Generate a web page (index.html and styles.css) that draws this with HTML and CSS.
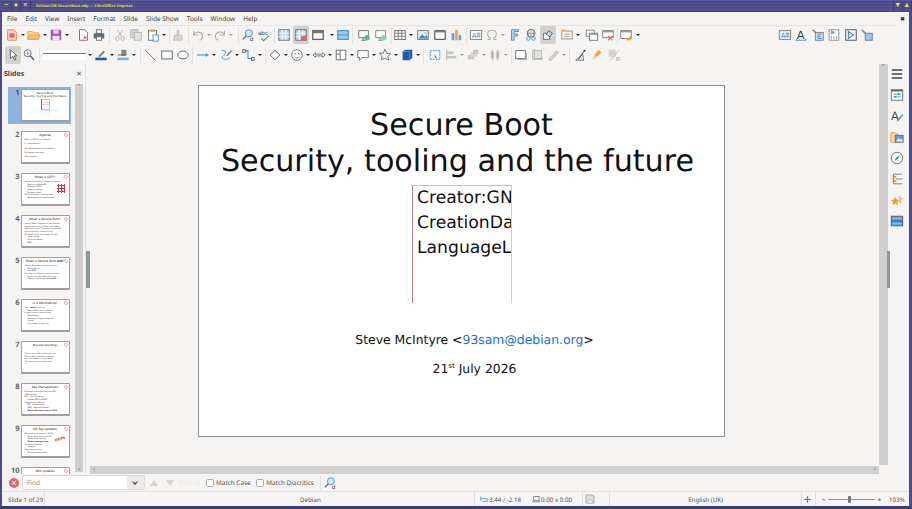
FILE: index.html
```html
<!DOCTYPE html>
<html lang="en">
<head>
    <meta charset="UTF-8">
    <title>Debian/DB-SecureBoot.odp — LibreOffice Impress</title>
    <link rel="stylesheet" href="styles.css">
</head>
<body>
<div class="window">
    <!-- window manager title bar -->
    <div class="titlebar">
        <span class="wm-btn">&#8722;</span>
        <span class="wm-btn">&#9679;</span>
        <span class="wm-btn">&#215;</span>
        <span class="wm-title">Debian/DB-SecureBoot.odp — LibreOffice Impress</span>
        <span class="wm-btn wm-right">&#9660;</span>
        <span class="wm-btn">&#9650;</span>
    </div>

    <div class="menubar">
        <span>File</span><span>Edit</span><span>View</span><span>Insert</span><span>Format</span><span>Slide</span><span>Slide Show</span><span>Tools</span><span>Window</span><span>Help</span>
        <span class="doc-close">&#10006;</span>
    </div>

    <!-- standard toolbar -->
    <div class="toolbar tb-top">
        <i class="b"><svg viewBox="0 0 16 16"><path d="M3 2h7l3 3v9H3z" fill="#fbd5c4" stroke="#e8794f"/><rect x="5" y="6" width="6" height="5" fill="#e5636b"/></svg></i><i class="a"></i>
        <i class="b"><svg viewBox="0 0 16 16"><path d="M1 13V4h5l1 1.500h6V13z" fill="#fbd7a8" stroke="#ee9d45"/><path d="M1 13l2-5h12l-2 5z" fill="#f8c078" stroke="#ee9d45"/></svg></i><i class="a"></i>
        <i class="b"><svg viewBox="0 0 16 16"><path d="M2 2h11l1 1v11H2z" fill="#a65bb5"/><rect x="5" y="2.500" width="6" height="4" fill="#e7d3ec"/><rect x="4" y="9" width="8" height="5" fill="#f1e6f4"/></svg></i><i class="a"></i>
        <i class="b ml5"><svg viewBox="0 0 16 16"><path d="M4 2h6l3 3v9H4z" fill="#fff" stroke="#666"/><path d="M8 13c2-3 2-4 1-6 1 3 3 4 5 4-2 0-4 1-6 2z" fill="#e5434b"/></svg></i>
        <i class="b"><svg viewBox="0 0 16 16"><rect x="5" y="2" width="6" height="4" fill="#fff" stroke="#666"/><rect x="2" y="6" width="12" height="6" rx="1" fill="#5f6b75"/><rect x="5" y="10" width="6" height="4" fill="#fff" stroke="#666"/></svg></i>
        <i class="s ml2"></i>
        <i class="b ml2 off"><svg viewBox="0 0 16 16"><path d="M5 2l5 8M11 2L6 10" fill="none" stroke="#555"/><circle cx="5" cy="12" r="2" fill="none" stroke="#555"/><circle cx="11" cy="12" r="2" fill="none" stroke="#555"/></svg></i>
        <i class="b off"><svg viewBox="0 0 16 16"><rect x="2" y="2" width="8" height="9" fill="#aaa" stroke="#555"/><rect x="6" y="5" width="8" height="9" fill="#ccc" stroke="#555"/></svg></i>
        <i class="b ml1"><svg viewBox="0 0 16 16"><rect x="3" y="3" width="9" height="11" fill="#fff" stroke="#666"/><rect x="5" y="1.500" width="5" height="3" fill="#e8a24f"/><rect x="8" y="8" width="6" height="7" fill="#fff" stroke="#3e89c9"/></svg></i><i class="a"></i>
        <i class="s ml2"></i>
        <i class="b off"><svg viewBox="0 0 16 16"><rect x="6.500" y="2" width="3" height="6" fill="#888"/><path d="M4 8h8l1 6H3z" fill="#aaa" stroke="#777"/></svg></i>
        <i class="s ml2"></i>
        <i class="b ml1 off"><svg viewBox="0 0 16 16"><path d="M3 3v5h5M3 8c2-4 8-5 10 0 1 3-1 5-3 6" fill="none" stroke="#555" stroke-width="1.300"/></svg></i><i class="a off"></i>
        <i class="b off"><svg viewBox="0 0 16 16"><path d="M13 3v5H8M13 8C11 4 5 3 3 8c-1 3 1 5 3 6" fill="none" stroke="#555" stroke-width="1.300"/></svg></i><i class="a off"></i>
        <i class="s ml4"></i>
        <i class="b ml1"><svg viewBox="0 0 16 16"><circle cx="9" cy="6" r="4" fill="#d6e8f7" stroke="#3e89c9"/><path d="M6 9l-4 4" stroke="#555" stroke-width="1.500"/><text x="10" y="15" class="ico-t">d</text></svg></i>
        <i class="b"><svg viewBox="0 0 16 16"><text x="1" y="7.500" class="ico-t">abc</text><path d="M5 12l2.500 2.500L14 8.500" fill="none" stroke="#47a46b" stroke-width="1.300"/></svg></i>
        <i class="s ml2"></i>
        <i class="b ml1"><svg viewBox="0 0 16 16"><rect x="2" y="2" width="12" height="12" fill="#bcd8f0" stroke="#666"/><path d="M6 2v12M10 2v12M2 6h12M2 10h12" stroke="#fff"/></svg></i>
        <i class="b ml1 on"><svg viewBox="0 0 16 16"><rect x="2" y="2" width="12" height="12" fill="#bcd8f0" stroke="#666"/><path d="M6 2v12M10 2v12M2 6h12M2 10h12" stroke="#fff"/><rect x="8" y="9" width="6" height="5" fill="#e5636b"/></svg></i>
        <i class="b ml1"><svg viewBox="0 0 16 16"><rect x="2" y="3" width="12" height="10" fill="#fff" stroke="#666" stroke-width="1.500"/><rect x="2" y="3" width="12" height="3" fill="#777"/></svg></i><i class="a ml3"></i>
        <i class="b"><svg viewBox="0 0 16 16"><rect x="2" y="3" width="12" height="10" fill="#9cc8ee" stroke="#3e89c9" stroke-width="1.200"/><path d="M2 8h12" stroke="#3e89c9"/></svg></i>
        <i class="s ml1"></i>
        <i class="b ml3"><svg viewBox="0 0 16 16"><path d="M2 3h11v8H2zM7 11v3M5 14h5" fill="#fff" stroke="#666"/><circle cx="11.500" cy="11" r="3" fill="#5dbb82"/></svg></i>
        <i class="b ml1"><svg viewBox="0 0 16 16"><path d="M2 3h11v8H2zM7 11v3M5 14h5" fill="#fff" stroke="#777"/><circle cx="11.500" cy="11" r="3" fill="#8fcfa8"/></svg></i>
        <i class="s ml2"></i>
        <i class="b"><svg viewBox="0 0 16 16"><rect x="2" y="3" width="12" height="10" fill="#fff" stroke="#666"/><path d="M2 6h12M2 9.500h12M6 3v10M10 3v10" stroke="#777"/></svg></i><i class="a"></i>
        <i class="b ml1"><svg viewBox="0 0 16 16"><rect x="2" y="3" width="12" height="10" fill="#e8f2fb" stroke="#666"/><path d="M3 12l4-5 3 3 2-2 2 4z" fill="#3e89c9"/><circle cx="11" cy="6" r="1.200" fill="#f0a040"/></svg></i>
        <i class="b ml1"><svg viewBox="0 0 16 16"><rect x="2" y="3" width="12" height="10" rx="1" fill="#fff" stroke="#666" stroke-width="1.500"/><rect x="2" y="3" width="12" height="2" fill="#777"/></svg></i>
        <i class="b"><svg viewBox="0 0 16 16"><rect x="3" y="6" width="3" height="8" fill="#5aa4e0"/><rect x="7" y="2" width="3" height="12" fill="#f0a040"/><rect x="11" y="8" width="3" height="6" fill="#5aa4e0"/></svg></i>
        <i class="s ml2"></i>
        <i class="b ml1"><svg viewBox="0 0 16 16"><rect x="1.500" y="3" width="13" height="10" fill="#fff" stroke="#777"/><text x="3" y="11" class="ico-t blue">A</text><path d="M9 6h4M9 8h4M9 10h4" stroke="#777"/></svg></i>
        <i class="b off"><svg viewBox="0 0 16 16"><path d="M3 13h3v-1.500C3.500 10 3 8 3 7c0-3 2-4.500 5-4.500S13 4 13 7c0 1-.5 3-3 4.500V13h3" fill="none" stroke="#555" stroke-width="1.200"/></svg></i><i class="a off"></i>
        <i class="b ml1"><svg viewBox="0 0 16 16"><path d="M4 2h8v2H7v3h4v2H7v5H4z" fill="#bcd8f0" stroke="#3e89c9"/></svg></i>
        <i class="b"><svg viewBox="0 0 16 16"><circle cx="8" cy="6" r="4.500" fill="#fff" stroke="#666"/><path d="M3.500 6h9M8 1.500v9M5.500 2.500c-1 2-1 5 0 7M10.500 2.500c1 2 1 5 0 7" fill="none" stroke="#666" stroke-width=".7"/><circle cx="5" cy="12" r="2" fill="#fff" stroke="#3e89c9"/><circle cx="11" cy="12" r="2" fill="#fff" stroke="#3e89c9"/></svg></i>
        <i class="b ml1 on"><svg viewBox="0 0 16 16"><rect x="3" y="6" width="7" height="7" fill="#fff" stroke="#666"/><path d="M9 3l4 3-3 4-4-3z" fill="#bcd8f0" stroke="#555"/></svg></i>
        <i class="b ml3"><svg viewBox="0 0 16 16"><rect x="2" y="3.500" width="12" height="9" fill="#fdf3e5" stroke="#888"/><rect x="2" y="1.500" width="4" height="3" fill="#f0b070"/><path d="M5 7h6M5 9.500h6" stroke="#999"/></svg></i><i class="a"></i>
        <i class="b ml3"><svg viewBox="0 0 16 16"><rect x="1.500" y="2.500" width="9" height="7" fill="#fff" stroke="#777"/><rect x="5" y="6" width="9.500" height="8" fill="#fff" stroke="#666"/><rect x="5" y="6" width="9.500" height="2" fill="#999"/></svg></i>
        <i class="b"><svg viewBox="0 0 16 16"><rect x="2" y="3" width="12" height="8" fill="#fff" stroke="#777"/><rect x="2" y="3" width="12" height="2" fill="#999"/><path d="M8 9l5 5M13 9l-5 5" stroke="#e5636b" stroke-width="1.300"/></svg></i>
        <i class="s ml1"></i>
        <i class="b"><svg viewBox="0 0 16 16"><rect x="2" y="3" width="12" height="9" fill="#fff" stroke="#777"/><rect x="2" y="3" width="12" height="2" fill="#999"/><path d="M14 8v6H8z" fill="#f0a040"/></svg></i><i class="a ml1"></i>

        <i class="b push"><svg viewBox="0 0 16 16"><rect x="1.500" y="3" width="13" height="10" fill="#eef5fb" stroke="#777"/><text x="3" y="11" class="ico-t blue">A</text><path d="M9 6h4M9 8h4M9 10h4" stroke="#777"/></svg></i>
        <i class="b ml05"><svg viewBox="0 0 16 16"><text x="3" y="12" class="ico-t big">A</text><path d="M2 14h12" stroke="#3e89c9"/><path d="M2 14l1.500-1.500M14 14l-1.500-1.500" stroke="#3e89c9"/></svg></i>
        <i class="b ml05"><svg viewBox="0 0 16 16"><rect x="5" y="5" width="9" height="9" fill="#cfe3f5" stroke="#777"/><path d="M2 2l4 4" stroke="#888" stroke-width="2"/><path d="M12 7H8v5h4M8 9.500h3" fill="none" stroke="#3e89c9"/></svg></i>
        <i class="b ml05"><svg viewBox="0 0 16 16"><rect x="2.500" y="2" width="11" height="12" fill="#fff" stroke="#888"/><path d="M5 3l4 2-4 2zM5 9v4M8 9v4M11 9v4" fill="#5aa4e0" stroke="#999"/></svg></i>
        <i class="b ml05"><svg viewBox="0 0 16 16"><rect x="2" y="2" width="12" height="12" fill="#fff" stroke="#666" stroke-width="1.300"/><path d="M5 4l6 4-6 4zM5 4v8" fill="none" stroke="#3e89c9" stroke-width="1.300"/></svg></i>
        <i class="b ml05 tb-end"><svg viewBox="0 0 16 16"><rect x="6" y="6" width="8" height="8" fill="#9cc8ee" stroke="#777"/><path d="M2 2l5 5" stroke="#888" stroke-width="2"/></svg></i>
    </div>

    <!-- drawing toolbar -->
    <div class="toolbar tb-draw">
        <i class="b on"><svg viewBox="0 0 16 16"><path d="M5 2v10l2.500-2.500L10 14l1.500-1-2.500-4h3.500z" fill="#fff" stroke="#555"/></svg></i>
        <i class="b"><svg viewBox="0 0 16 16"><circle cx="6.500" cy="6" r="4" fill="#e8f2fb" stroke="#666"/><path d="M9.500 9l4 4.500" stroke="#555" stroke-width="1.600"/><path d="M5 6h3M6.500 4.500v3" stroke="#e5636b"/></svg></i>
        <i class="s ml2"></i>
        <span class="line-box ml3"></span><i class="a ml1"></i>
        <i class="b"><svg viewBox="0 0 16 16"><path d="M5 9l6-6 1.500 1.500-6 6z" fill="#777"/><rect x="1.500" y="11" width="13" height="3" fill="#1c5ea8"/></svg></i><i class="a"></i>
        <i class="b"><svg viewBox="0 0 16 16"><rect x="6" y="2" width="6" height="7" fill="#888"/><path d="M2 8l8 0" stroke="#555"/><rect x="1.500" y="11" width="13" height="3" fill="#7fb2e0"/></svg></i><i class="a"></i>
        <i class="s ml3"></i>
        <i class="b ml1"><svg viewBox="0 0 16 16"><path d="M2 2l12 12" stroke="#3e89c9" stroke-width="1.100"/></svg></i>
        <i class="b ml1"><svg viewBox="0 0 16 16"><rect x="2" y="3.500" width="12" height="9" fill="#fff" stroke="#666" stroke-width="1.100"/></svg></i>
        <i class="b"><svg viewBox="0 0 16 16"><ellipse cx="8" cy="8" rx="6" ry="4.500" fill="#fff" stroke="#666" stroke-width="1.100"/></svg></i>
        <i class="s ml1"></i>
        <i class="b ml2"><svg viewBox="0 0 16 16"><path d="M1 8h10" stroke="#3e89c9" stroke-width="1.200"/><path d="M11 6l4 2-4 2z" fill="#3e89c9"/></svg></i><i class="a"></i>
        <i class="b ml1"><svg viewBox="0 0 16 16"><path d="M3 3c8-1 4 5 1 7-2 2 3 5 9 1" fill="none" stroke="#3e89c9"/><path d="M9 9l5-6" stroke="#666" stroke-width="1.500"/></svg></i><i class="a"></i>
        <i class="b"><svg viewBox="0 0 16 16"><path d="M4 3h4v9h5" fill="none" stroke="#3e89c9" stroke-width="1.200"/><rect x="2" y="2" width="3" height="3" fill="#fff" stroke="#555"/><rect x="12" y="11" width="3" height="3" fill="#fff" stroke="#555"/></svg></i><i class="a ml1"></i>
        <i class="s ml2"></i>
        <i class="b ml1"><svg viewBox="0 0 16 16"><path d="M8 2.500L13.500 8 8 13.500 2.500 8z" fill="#fff" stroke="#666" stroke-width="1.100"/></svg></i><i class="a"></i>
        <i class="b"><svg viewBox="0 0 16 16"><circle cx="8" cy="8" r="6" fill="#fff" stroke="#666"/><circle cx="6" cy="6.500" r=".8" fill="#666"/><circle cx="10" cy="6.500" r=".8" fill="#666"/><path d="M5 10c2 2 4 2 6 0" fill="none" stroke="#666"/></svg></i><i class="a"></i>
        <i class="b"><svg viewBox="0 0 16 16"><path d="M1 8l3-2.500V7h8V5.500L15 8l-3 2.500V9H4v1.500z" fill="#fff" stroke="#666"/></svg></i><i class="a"></i>
        <i class="b"><svg viewBox="0 0 16 16"><rect x="2.500" y="2.500" width="11" height="11" fill="#fff" stroke="#666"/><path d="M7 2.500v11M2.500 7H7" stroke="#666"/></svg></i><i class="a"></i>
        <i class="b"><svg viewBox="0 0 16 16"><path d="M2 3h12v8H7l-3 3v-3H2z" fill="#fff" stroke="#666"/></svg></i><i class="a"></i>
        <i class="b"><svg viewBox="0 0 16 16"><path d="M8 1.500l2 4.500 4.500.500-3.300 3 1 4.500L8 11.500 3.800 13.500l1-4.500-3.300-3L6 6z" fill="#fff" stroke="#666"/></svg></i><i class="a"></i>
        <i class="b"><svg viewBox="0 0 16 16"><path d="M3 4l3-2h8v9l-3 3H3z" fill="#1c5ea8"/><path d="M3 4h8v10" fill="none" stroke="#4a8fd6"/></svg></i><i class="a"></i>
        <i class="s ml2"></i>
        <i class="b ml3"><svg viewBox="0 0 16 16"><rect x="2.500" y="3" width="11" height="10" fill="none" stroke="#3e89c9" stroke-dasharray="2 1"/><path d="M7 7l4 5-3-1z" fill="#777"/></svg></i>
        <i class="b off"><svg viewBox="0 0 16 16"><path d="M3 2v12" stroke="#555"/><rect x="3" y="4" width="8" height="3" fill="#888"/><rect x="3" y="9" width="11" height="3" fill="#888"/></svg></i><i class="a off"></i>
        <i class="b off"><svg viewBox="0 0 16 16"><rect x="2" y="8" width="7" height="5" fill="#888"/><rect x="5" y="5" width="7" height="5" fill="#aaa"/><rect x="8" y="2" width="6" height="5" fill="#888"/></svg></i><i class="a off"></i>
        <i class="b off"><svg viewBox="0 0 16 16"><rect x="3" y="4" width="4" height="8" fill="#888"/><rect x="9" y="4" width="4" height="8" fill="#888"/><path d="M5 2v12M11 2v12" stroke="#555"/></svg></i><i class="a off"></i>
        <i class="s ml2"></i>
        <i class="b ml1"><svg viewBox="0 0 16 16"><rect x="2" y="3" width="11" height="9" fill="#fff" stroke="#666"/><path d="M14 5v8H4" fill="none" stroke="#aaa" stroke-width="1.400"/></svg></i>
        <i class="b off"><svg viewBox="0 0 16 16"><rect x="3" y="3" width="10" height="10" fill="#ccc" stroke="#666"/><path d="M5 1v11h10" fill="none" stroke="#555"/></svg></i>
        <i class="b off"><svg viewBox="0 0 16 16"><path d="M3 13l9-10 2 2-9 10z" fill="#aaa" stroke="#666"/></svg></i><i class="a off"></i>
        <i class="s ml2"></i>
        <i class="b ml3"><svg viewBox="0 0 16 16"><path d="M10 7L2 14h9z" fill="none" stroke="#666"/><path d="M5 13L12 3" stroke="#333"/><rect x="11" y="2" width="2" height="2" fill="#333"/></svg></i>
        <i class="b"><svg viewBox="0 0 16 16"><path d="M5 8l5-6 3 3-5 5z" fill="#f0a040"/><path d="M3 14l2-6 3 2z" fill="#f5c48a"/></svg></i>
        <i class="b ml1 off"><svg viewBox="0 0 16 16"><rect x="2" y="2" width="8" height="8" fill="#aaa"/><path d="M4 14L14 2" stroke="#666"/><rect x="11" y="11" width="3" height="3" fill="#ccc" stroke="#777"/></svg></i>
    </div>

    <div class="workspace">
        <aside class="slides-panel">
            <div class="panel-head"><b>Slides</b><span class="panel-close">&#10005;</span></div>
            <div class="panel-body">
                <div class="slide-list">
                    <div class="row current"><span class="num">1</span>
                        <div class="thumb t-title">
                            <p class="th t1">Secure Boot<br>Security, tooling and the future</p>
                            <div class="th-box">Creator:GN<br>CreationDa<br>LanguageL</div>
                            <p class="th-mail">Steve McIntyre &lt;93sam@debian.org&gt;</p>
                            <p class="th-mail dark">21st July 2026</p>
                        </div>
                    </div>
                    <div class="row"><span class="num">2</span>
                        <div class="thumb"><i class="swirl"></i>
                            <p class="th">Agenda</p>
                            <ul><li>What is UEFI Secure Boot?</li><li>Is it worthwhile?</li><li>Key Management and updates</li><li>Packaging and tools</li><li>Shim-tooling</li></ul>
                        </div>
                    </div>
                    <div class="row"><span class="num">3</span>
                        <div class="thumb"><i class="swirl"></i><i class="red-art"></i>
                            <p class="th">What is UEFI?</p>
                            <ul class="dense"><li>Unified Extensible Firmware Interface</li><li class="sub">Boot on x86/arm64</li><li class="sub">Replaces BIOS</li><li class="sub">Modular design</li><li class="sub">Network stack</li><li>BIOS emulation is going away</li><li class="sub">Booting via removable path</li></ul>
                        </div>
                    </div>
                    <div class="row"><span class="num">4</span>
                        <div class="thumb"><i class="swirl"></i>
                            <p class="th">What is Secure Boot?</p>
                            <ul class="dense"><li>Secure Boot is signature verification</li><li>Signed code only loaded in firmware</li><li>Keys held in the firmware, db and dbx</li><li>Linux and shim chain of trust</li><li>Microsoft is the key holder of note</li><li class="sub">Shim review</li><li class="sub">Linux lockdown</li><li class="sub">DBX</li></ul>
                        </div>
                    </div>
                    <div class="row"><span class="num">5</span>
                        <div class="thumb"><i class="swirl"></i>
                            <p class="th">What is Secure Boot <b>not</b>?</p>
                            <ul class="dense"><li>Secure Boot does not block Linux</li><li class="sub">Not a lock-in</li><li class="sub">Not DRM</li><li>Security by default is what we want</li><li class="sub">Users can add their own keys</li><li class="sub">Owners can disable <b>it at will</b></li></ul>
                        </div>
                    </div>
                    <div class="row"><span class="num">6</span>
                        <div class="thumb"><i class="swirl"></i>
                            <p class="th">Is it Worthwhile?</p>
                            <ul class="dense"><li>Yes, I <b>really</b> think so</li><li class="sub">Blocks boot-level malware</li><li>It gives users a better story</li><li class="sub">Bootloaders</li><li class="sub">Loading unsigned modules</li><li class="sub">Kernel</li><li class="sub">Still needs to keep up</li></ul>
                        </div>
                    </div>
                    <div class="row"><span class="num">7</span>
                        <div class="thumb"><i class="swirl"></i>
                            <p class="th small">Misunderstandings</p>
                            <ul class="dense gap"><li>This is not a plot to lock you out</li><li>This is about defence in depth</li><li>You can disable it if you want</li><li>You can enrol your own keys</li></ul>
                        </div>
                    </div>
                    <div class="row"><span class="num">8</span>
                        <div class="thumb"><i class="swirl"></i>
                            <p class="th">Key Management</p>
                            <ul class="dense"><li>Microsoft manages the main DB</li><li>Platform Key</li><li>KEK - Key Exchange</li><li class="sub">Update DB and DBX</li><li>Signature databases</li><li class="sub">DB - allowed keys</li><li class="sub">DBX - blocked hashes</li><li class="sub"><b>Microsoft keys expire 2026</b></li></ul>
                        </div>
                    </div>
                    <div class="row"><span class="num">9</span>
                        <div class="thumb"><i class="swirl"></i><i class="stamp">OOPS</i>
                            <p class="th">DB Key updates</p>
                            <ul class="dense"><li>Microsoft keys expire in 2026</li><li class="sub">Shim signed with old CA</li><li class="sub">Needs new signing</li><li class="sub"><b>Dates coming soon</b></li><li>Firmware updates</li><li class="sub">Vendors</li><li>New signed shim</li><li class="sub">Distros need to plan</li></ul>
                        </div>
                    </div>
                    <div class="row"><span class="num">10</span>
                        <div class="thumb"><i class="swirl"></i>
                            <p class="th">DBX updates</p>
                        </div>
                    </div>
                </div>
                <div class="vscroll small-bar"><span class="chev">&#8963;</span><span class="chev down">&#8964;</span></div>
            </div>
        </aside>

        <i class="handle left-handle"></i>

        <main class="canvas">
            <div class="canvas-view">
                <section class="slide">
                    <h1>Secure Boot<br><span class="title-line">Security, tooling and the future</span></h1>
                    <div class="object">
                        <p>Creator:GN</p>
                        <p>CreationDa</p>
                        <p>LanguageL</p>
                    </div>
                    <div class="byline">
                        <p class="author">Steve McIntyre &lt;<a>93sam@debian.org</a>&gt;</p>
                        <p class="date">21<sup>st</sup> July 2026</p>
                    </div>
                </section>
            </div>
            <div class="hscroll"><span class="hchev">&#8249;</span><span class="hchev">&#8250;</span></div>
        </main>

        <div class="vscroll main-bar"><span class="chev">&#8963;</span></div>

        <i class="handle right-handle"></i>

        <aside class="deck">
            <svg viewBox="0 0 16 16"><path d="M2 3.500h12M2 8h12M2 12.500h12" stroke="#444" stroke-width="1.800"/></svg>
            <svg viewBox="0 0 16 16"><rect x="1.500" y="2" width="13" height="12" fill="#fff" stroke="#666"/><rect x="1.500" y="2" width="13" height="2" fill="#666"/><path d="M4 7h8M4 10h8" stroke="#5aa4e0" stroke-width="1.200"/><rect x="9" y="6" width="2" height="2" fill="#3e89c9"/><rect x="5" y="9" width="2" height="2" fill="#3e89c9"/></svg>
            <svg viewBox="0 0 16 16"><text x="1" y="12" class="ico-t big">A</text><path d="M8 13l6-7 1 1-6 7z" fill="#3e89c9"/><path d="M7 15l1-2 1 1z" fill="#f0a040"/></svg>
            <svg viewBox="0 0 16 16"><path d="M1 14V3h5l1 1.500h2V14z" fill="#fbd7a8" stroke="#ee9d45"/><rect x="6" y="6" width="9" height="8" fill="#5aa4e0" stroke="#666"/><path d="M7 13l3-4 2 2 1-1 2 3z" fill="#fff"/></svg>
            <svg viewBox="0 0 16 16"><circle cx="8" cy="8" r="6.500" fill="#fff" stroke="#666"/><path d="M11 5L9 9 5 11l2-4z" fill="#3e89c9"/></svg>
            <svg viewBox="0 0 16 16"><rect x="1.500" y="3" width="6" height="10" fill="#fbd7a8" opacity=".7"/><path d="M4 2.500h10M4 2.500v11M4 13.500h10M7 8h7M4 5.500h3M4 10.500h3" fill="none" stroke="#777"/></svg>
            <svg viewBox="0 0 16 16"><path d="M5 3l1.500 3.500L10 7 7.500 9.500 8 13l-3-2-3 2 .5-3.500L0 7l3.500-.5z" fill="#f0a040" transform="translate(1 1)"/><path d="M10 3l1 2.500 3 .5-2 2 .5 3-2.500-1.500" fill="#f5d0a0" stroke="#e8a24f"/></svg>
            <svg viewBox="0 0 16 16"><rect x="1.500" y="2.500" width="13" height="11" fill="#5aa4e0" stroke="#555"/><path d="M1.500 8h13" stroke="#1c5ea8"/><path d="M3 5h10M3 11h10" stroke="#9cc8ee"/></svg>
        </aside>
    </div>

    <div class="findbar">
        <span class="find-close">&#215;</span>
        <div class="find-input"><span>Find</span><span class="find-drop"></span></div>
        <span class="tri up"></span>
        <span class="tri"></span>
        <span class="find-all">Find All</span>
        <label><i class="check"></i>Match Case</label>
        <label><i class="check"></i>Match Diacritics</label>
        <i class="s find-sep"></i>
        <svg class="find-ico" viewBox="0 0 16 16"><circle cx="9" cy="6" r="4" fill="#d6e8f7" stroke="#3e89c9"/><path d="M6 9l-4 4" stroke="#555" stroke-width="1.500"/><text x="10" y="15" class="ico-t">d</text></svg>
    </div>

    <div class="statusbar">
        <span class="cell c-slide">Slide 1 of 29</span>
        <span class="cell c-master">Debian</span>
        <span class="cell c-pos">
            <svg viewBox="0 0 10 10"><path d="M1 2v5M1 4.500h8V8H3" fill="none" stroke="#3e89c9"/></svg>3.44 / -2.18
            <svg class="size-ico" viewBox="0 0 10 10"><rect x="2" y="2" width="7" height="5" fill="none" stroke="#777"/><path d="M0 8.500h10" stroke="#3e89c9"/></svg>0.00 x 0.00
        </span>
        <span class="cell c-save"><svg viewBox="0 0 10 10"><path d="M1 1h7l1 1v7H1z" fill="#ddd" stroke="#aaa"/><rect x="3" y="6" width="4" height="3" fill="#f5f4f2" stroke="#aaa" stroke-width=".5"/></svg></span>
        <span class="cell c-lang">English (UK)</span>
        <span class="cell c-fit"><svg viewBox="0 0 12 12"><path d="M6 0l2 2.500H7V5h2.500V4L12 6 9.500 8V7H7v2.500h1L6 12 4 9.500h1V7H2.500v1L0 6l2.500-2v1H5V2.500H4z" fill="#3e89c9"/></svg></span>
        <span class="zoom-ctl"><i class="zm">&#8722;</i><i class="track"><i class="knob"></i></i><i class="zm">+</i></span>
        <span class="cell c-pct">103%</span>
    </div>
</div>
</body>
</html>
```

FILE: styles.css
```css
html, body {
    margin: 0;
    padding: 0;
    overflow: hidden;
}

body {
    font-family: "Noto Sans", "Open Sans", sans-serif;
    font-size: 6.400px;
    color: #444;
    background: #f5f4f2;
    text-rendering: geometricPrecision;
}

p, h1, ul {
    margin: 0;
    padding: 0;
}

i {
    font-style: normal;
}

.window {
    display: flex;
    flex-direction: column;
    width: 912px;
    height: 509px;
    box-sizing: border-box;
    border-left: 2px solid #4f4b8e;
    border-right: 3px solid #4f4b8e;
    border-bottom: 3px solid #3d3a78;
    background: #f5f4f2;
}

/* title bar */
.titlebar {
    display: flex;
    align-items: center;
    flex: 0 0 12px;
    margin: 0 -3px 0 -2px;
    padding-left: 2px;
    color: #d9d63f;
    font-size: 3.900px;
    font-weight: bold;
    background: repeating-linear-gradient(#5a5699 0, #5a5699 1px, #4d4989 1px, #4d4989 3px);
}

.wm-btn {
    width: 9.500px;
    height: 10px;
    line-height: 10px;
    text-align: center;
    font-size: 7px;
    font-weight: bold;
    color: #f2ee3c;
    border-right: 1px solid #3d3a78;
    box-sizing: border-box;
}

.wm-title {
    margin-left: 5.500px;
    white-space: nowrap;
}

.wm-right {
    margin-left: auto;
    border-left: 1px solid #3d3a78;
}

/* menu */
.menubar {
    display: flex;
    align-items: center;
    flex: 0 0 13px;
    padding-left: 5px;
    gap: 8px;
    font-size: 6.500px;
    color: #3c3c3c;
}

.doc-close {
    margin-left: auto;
    margin-right: 4px;
    font-size: 6px;
    color: #222;
}

/* toolbars */
.toolbar {
    display: flex;
    align-items: center;
    padding-left: 2px;
    box-sizing: border-box;
}

.tb-top {
    flex: 0 0 21px;
    padding-bottom: 2px;
    margin-right: 12px;
    border-top: 1px solid #e6e5e2;
}

.tb-draw {
    flex: 0 0 18px;
    padding-left: 3px;
}

.b {
    display: flex;
    align-items: center;
    justify-content: center;
    flex: 0 0 16px;
    height: 16px;
}

.b svg {
    width: 14px;
    height: 14px;
}

.b.on {
    height: 18px;
    background: #d3d1cd;
    border-radius: 2px;
}

.a {
    display: flex;
    justify-content: center;
    flex: 0 0 6px;
    height: 3px;
}

.a::before {
    content: "";
    width: 0;
    height: 0;
    border-top: 2.500px solid #222;
    border-left: 2px solid transparent;
    border-right: 2px solid transparent;
}

.s {
    flex: 0 0 1px;
    height: 17px;
    background: #e3e2de;
}

.off {
    opacity: .42;
}

.ml05 { margin-left: .500px; }
.ml1 { margin-left: 1px; }
.ml2 { margin-left: 2px; }
.ml3 { margin-left: 3px; }
.ml4 { margin-left: 4px; }
.ml5 { margin-left: 5px; }

.push {
    margin-left: auto;
}

.tb-end {
    margin-right: 22px;
}

.line-box {
    flex: 0 0 43px;
    height: 10px;
    background: linear-gradient(#fff 0, #fff 3px, #777 3px, #777 4px, #fff 4px);
}

.ico-t {
    font-family: "DejaVu Sans", sans-serif;
    font-size: 6.500px;
    fill: #444;
}

.ico-t.blue {
    font-size: 8px;
    fill: #3e89c9;
}

.ico-t.big {
    font-size: 13px;
}

/* workspace */
.workspace {
    display: flex;
    flex: 1;
    min-height: 0;
}

.slides-panel {
    display: flex;
    flex-direction: column;
    flex: 0 0 83px;
    min-height: 0;
    border-right: 1px solid #e3e2df;
}

.panel-head {
    display: flex;
    align-items: center;
    justify-content: space-between;
    flex: 0 0 20px;
    padding: 0 3px 0 2px;
    font-size: 7px;
    color: #444;
}

.panel-close {
    font-size: 7px;
    color: #555;
}

.panel-body {
    display: flex;
    flex: 1;
    min-height: 0;
    padding-left: 6px;
}

.slide-list {
    flex: 0 0 63px;
    overflow: hidden;
    padding-top: 3px;
}

.row {
    display: flex;
    justify-content: flex-end;
    height: 37px;
    margin-bottom: 5px;
    padding: 1.500px 1.500px 0 0;
    box-sizing: border-box;
}

.row.current {
    background: #8fb3dc;
}

.num {
    margin-right: 1px;
    font-size: 7.500px;
    font-weight: bold;
    line-height: 9px;
    color: #666;
}

.row.current .num {
    color: #33507a;
}

.thumb {
    position: relative;
    width: 49px;
    height: 33px;
    box-sizing: border-box;
    overflow: hidden;
    padding-top: 2px;
    font-family: "DejaVu Sans", sans-serif;
    font-size: 1.950px;
    line-height: 2.700px;
    color: #333;
    background: #fff;
    border: 1px solid #a0a0a0;
    border-right-width: 1.500px;
    border-bottom-width: 2px;
    border-radius: 1px;
}

.th {
    font-size: 3px;
    line-height: 3.400px;
    text-align: center;
    color: #222;
}

.th.t1 {
    font-size: 2.750px;
    white-space: nowrap;
}

.th.small {
    font-size: 2.600px;
}

.thumb ul {
    list-style: none;
    padding: 2px 2px 0 3px;
    white-space: nowrap;
}

.thumb ul:not(.dense) li {
    margin-bottom: 1.600px;
}

.thumb .sub {
    padding-left: 3px;
}

.thumb .gap {
    padding-top: 6px;
}

.th-box {
    width: 9px;
    height: 11px;
    margin: 1px auto 0;
    padding-left: .500px;
    box-sizing: border-box;
    overflow: hidden;
    font-size: 1.600px;
    line-height: 2.300px;
    white-space: nowrap;
    color: #a44;
    border: .500px solid #e2b8b8;
    border-left: 1px solid #b44;
}

.th-mail {
    margin-left: 2px;
    font-size: 1.150px;
    line-height: 3px;
    text-align: center;
    color: #3e89c9;
}

.th-mail.dark {
    color: #777;
}

.swirl {
    position: absolute;
    top: 1px;
    right: 1px;
    width: 4px;
    height: 4px;
    box-sizing: border-box;
    border: 1px solid #f0a9b8;
    border-radius: 50%;
}

.red-art {
    position: absolute;
    top: 10px;
    right: 4px;
    width: 8px;
    height: 9px;
    background: radial-gradient(circle, #d9303e 1px, transparent 1.200px) 0 0 / 3px 3px;
}

.stamp {
    position: absolute;
    top: 11px;
    right: 3px;
    font-size: 3.400px;
    line-height: 5px;
    font-weight: bold;
    color: #e01b2c;
    transform: rotate(-16deg);
}

.vscroll {
    display: flex;
    flex-direction: column;
    justify-content: space-between;
    align-items: center;
    box-sizing: border-box;
    background: #cfcfcf;
    color: #777;
}

.small-bar {
    flex: 0 0 8px;
    margin: 0 0 2px 4px;
}

.main-bar {
    flex: 0 0 9px;
    margin-bottom: 9px;
}

.chev {
    font-size: 7px;
    line-height: 7px;
}

.handle {
    display: block;
    flex: 0 0 4px;
    position: relative;
}

.handle::after {
    content: "";
    position: absolute;
    left: 0;
    top: 187px;
    width: 3.500px;
    height: 37px;
    background: #8f9696;
}

.right-handle {
    flex-basis: 3px;
    margin-left: -1px;
}

.right-handle::after {
    width: 3px;
}

.canvas {
    display: flex;
    flex-direction: column;
    flex: 1;
    min-width: 0;
}

.canvas-view {
    flex: 1;
    min-height: 0;
    padding: 21px 0 0 108px;
    overflow: hidden;
}

.hscroll {
    display: flex;
    justify-content: space-between;
    flex: 0 0 8px;
    padding: 0 3px;
    font-size: 7px;
    line-height: 7px;
    color: #777;
    background: #cfcfcf;
}

.slide {
    width: 527px;
    height: 352px;
    box-sizing: border-box;
    padding-top: 22px;
    font-family: "DejaVu Sans", sans-serif;
    color: #111;
    text-align: center;
    background: #fff;
    border: 1px solid #8e8e8e;
}

.slide h1 {
    font-size: 30.200px;
    font-weight: normal;
    line-height: 36px;
}

.title-line {
    display: inline-block;
    padding-right: 8px;
}

.object {
    width: 100px;
    height: 118px;
    margin: 5px 0 0 213px;
    box-sizing: border-box;
    padding-left: 4px;
    overflow: hidden;
    white-space: nowrap;
    text-align: left;
    font-size: 17.200px;
    line-height: 25px;
    border: 1px solid #ddb4b4;
    border-right-color: #e2c6c6;
    border-left-color: #c77a7a;
    border-bottom: 0;
}

.byline {
    padding-left: 26px;
    font-size: 12.400px;
    line-height: 17px;
}

.author {
    margin-top: 28px;
}

.author a {
    color: #1f6fd0;
}

.date {
    margin-top: 12px;
}

.date sup {
    font-size: 7px;
    line-height: 0;
}

/* right side deck */
.deck {
    display: flex;
    flex-direction: column;
    flex: 0 0 19px;
    gap: 7px;
    padding-top: 3px;
}

.deck svg {
    width: 14px;
    height: 14px;
}

/* find bar */
.findbar {
    display: flex;
    align-items: center;
    flex: 0 0 17px;
    padding-left: 7px;
    color: #555;
    border-bottom: 1px solid #e3e2df;
}

.find-close {
    width: 10px;
    height: 10px;
    line-height: 10px;
    text-align: center;
    font-size: 9px;
    font-weight: bold;
    color: #fff;
    background: #e8636b;
    border-radius: 50%;
}

.find-input {
    display: flex;
    align-items: center;
    justify-content: space-between;
    width: 123px;
    height: 15px;
    margin-left: 3px;
    box-sizing: border-box;
    padding-left: 4px;
    color: #888;
    background: #fff;
    border: 1px solid #dddcd8;
    border-radius: 2px;
}

.find-drop {
    position: relative;
    width: 17px;
    height: 100%;
    background: #ecebe8;
}

.find-drop::after {
    content: "";
    position: absolute;
    left: 6px;
    top: 4px;
    width: 3px;
    height: 3px;
    border-right: 1px solid #333;
    border-bottom: 1px solid #333;
    transform: rotate(45deg);
}

.tri {
    width: 0;
    height: 0;
    margin-left: 8px;
    border-left: 4.500px solid transparent;
    border-right: 4.500px solid transparent;
    border-top: 6px solid #d5d4d1;
}

.tri.up {
    margin-left: 4.500px;
    border-top: 0;
    border-bottom: 6px solid #d5d4d1;
}

.find-all {
    width: 26px;
    margin-left: 5px;
    color: #ecebe8;
    white-space: nowrap;
}

.findbar label {
    display: flex;
    align-items: center;
    gap: 2.500px;
    margin-left: 5px;
}

.findbar label:first-of-type {
    margin-left: 1px;
}

.check {
    width: 8px;
    height: 8px;
    box-sizing: border-box;
    background: #fff;
    border: 1px solid #aaa;
    border-radius: 1.500px;
}

.find-sep {
    margin-left: 6px;
    height: 14px;
}

.find-ico {
    width: 14px;
    height: 14px;
    margin-left: 2px;
}

/* status bar */
.statusbar {
    display: flex;
    align-items: center;
    flex: 0 0 14px;
    font-size: 6.200px;
    color: #555;
}

.cell {
    display: flex;
    align-items: center;
    height: 100%;
    box-sizing: border-box;
    border-right: 1px solid #e0dfdc;
    white-space: nowrap;
}

.cell svg {
    width: 8px;
    height: 8px;
}

.c-slide {
    width: 43px;
    padding-left: 6px;
}

.c-master {
    width: 430px;
    padding-left: 255px;
}

.c-pos {
    width: 108px;
    padding-left: 5px;
    gap: 1px;
}

.size-ico {
    margin-left: 10px;
}

.c-save {
    width: 27px;
    padding-left: 2px;
}

.c-save svg {
    width: 10px;
    height: 10px;
}

.c-lang {
    width: 192px;
    justify-content: center;
}

.c-fit {
    width: 14px;
    padding-left: 2px;
}

.c-fit svg {
    width: 7px;
    height: 7px;
}

.zoom-ctl {
    display: flex;
    align-items: center;
    width: 71px;
    padding: 0 4px;
    box-sizing: border-box;
    font-weight: bold;
}

.zm {
    flex: 0 0 7px;
    text-align: center;
    color: #555;
}

.track {
    position: relative;
    flex: 1;
    height: 1px;
    margin: 0 1px;
    background: #999;
}

.knob {
    position: absolute;
    left: 20px;
    top: -3px;
    width: 3px;
    height: 7px;
    background: #777;
    border-radius: 1px;
}

.c-pct {
    padding-left: 2px;
    border-right: 0;
}
```
